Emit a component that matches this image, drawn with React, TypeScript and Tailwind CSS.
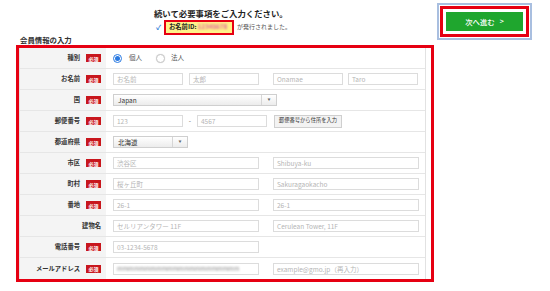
import React from 'react';

const font = { fontFamily: '"Noto Sans CJK JP", "Noto Sans", sans-serif' };

const Badge = () => (
  <span className="ml-[6px] inline-flex h-[8px] w-[15px] items-center justify-center bg-[#c8161d] text-[5px] leading-none text-white">
    必須
  </span>
);

const Field = ({ text, w = 'w-[70px]', dark = false }: { text: string; w?: string; dark?: boolean }) => (
  <div
    className={`${w} flex h-[12px] items-center overflow-hidden whitespace-nowrap border border-[#dcdcdc] bg-white px-[3px] text-[6.5px] leading-[10px] ${
      dark ? 'text-[#333]' : 'text-[#b5b5b5]'
    }`}
  >
    {text}
  </div>
);

const Row = ({ label, required = true, last = false, children }: { label: string; required?: boolean; last?: boolean; children: React.ReactNode }) => (
  <div className={`flex h-[21px] ${last ? '' : 'border-b border-[#e6e6e6]'}`}>
    <div className="flex w-[86px] items-center justify-end whitespace-nowrap bg-[#f4f4f4] pr-[5px] text-[6.3px] font-bold text-[#333]">
      <span>{label}</span>
      {required && <Badge />}
    </div>
    <div className="flex flex-1 items-center bg-white pl-[7px]">{children}</div>
  </div>
);

const Select = ({ value, w }: { value: string; w: string }) => (
  <div className={`${w} flex h-[12px] items-stretch border border-[#cfcfcf] bg-gradient-to-b from-white to-[#ececec] text-[6.5px] leading-[10px] text-[#333]`}>
    <span className="flex flex-1 items-center px-[4px]">{value}</span>
    <span className="flex w-[15px] items-center justify-center border-l border-[#d6d6d6] text-[3px] text-[#666]">▼</span>
  </div>
);

export default function App() {
  return (
    <div className="flex h-[291px] w-[550px] overflow-hidden bg-white" style={font}>
      <div className="w-[436px] shrink-0">
        <div className="pl-[154px] pt-[7px]">
          <div className="h-[12px] text-[8.4px] font-bold leading-[12px] text-[#222]">
            続いて必要事項をご入力ください。
          </div>
          <div className="flex h-[16px] items-center whitespace-nowrap">
            <span className="w-[10px] pl-[2px] text-[7px] font-bold leading-none text-[#2b7bd6]">✓</span>
            <div className="flex h-[15px] w-[70px] items-center overflow-hidden border-2 border-[#e60012] bg-[#fff38a] px-[3px] text-[6.3px] font-bold leading-none text-[#222]">
              お名前ID:
              <span className="ml-[1px] blur-[0.8px] text-[#e0609a]">12345678</span>
            </div>
            <span className="ml-[3px] text-[6px] leading-none text-[#555]">が発行されました。</span>
          </div>
        </div>
        <div className="h-[10px] pl-[20px] text-[7.4px] font-bold leading-[10px] text-[#333]">会員情報の入力</div>
        <div className="ml-[16px] w-[418px] border-[3px] border-[#e60012] pr-[5px]">
          <div className="border-x border-[#e2e2e2]">
            <Row label="種別">
              <div className="flex items-center text-[6.5px] text-[#555]">
                <span className="flex h-[9px] w-[9px] items-center justify-center rounded-full border border-[#2a7ae2] bg-white">
                  <span className="h-[5px] w-[5px] rounded-full bg-[#2a7ae2]" />
                </span>
                <span className="ml-[7px]">個人</span>
                <span className="ml-[14px] h-[9px] w-[9px] rounded-full border border-[#c8c8c8] bg-white shadow-[0_0_1px_rgba(0,0,0,0.2)]" />
                <span className="ml-[6px]">法人</span>
              </div>
            </Row>
            <Row label="お名前">
              <div className="flex">
                <Field text="お名前" />
                <div className="ml-[6px]"><Field text="太郎" /></div>
                <div className="ml-[14px]"><Field text="Onamae" /></div>
                <div className="ml-[5px]"><Field text="Taro" /></div>
              </div>
            </Row>
            <Row label="国">
              <Select value="Japan" w="w-[164px]" />
            </Row>
            <Row label="郵便番号">
              <div className="flex items-center">
                <Field text="123" />
                <span className="w-[14px] text-center text-[6.5px] text-[#666]">-</span>
                <Field text="4567" />
                <button className="ml-[7px] flex h-[13px] w-[68px] items-center justify-center whitespace-nowrap border border-[#cfcfcf] bg-[#f3f3f3] text-[5.3px] leading-none text-[#333]">
                  郵便番号から住所を入力
                </button>
              </div>
            </Row>
            <Row label="都道府県">
              <Select value="北海道" w="w-[75px]" />
            </Row>
            <Row label="市区">
              <div className="flex gap-[14px]">
                <Field text="渋谷区" w="w-[146px]" />
                <Field text="Shibuya-ku" w="w-[146px]" />
              </div>
            </Row>
            <Row label="町村">
              <div className="flex gap-[14px]">
                <Field text="桜ヶ丘町" w="w-[146px]" />
                <Field text="Sakuragaokacho" w="w-[146px]" />
              </div>
            </Row>
            <Row label="番地">
              <div className="flex gap-[14px]">
                <Field text="26-1" w="w-[146px]" />
                <Field text="26-1" w="w-[146px]" />
              </div>
            </Row>
            <Row label="建物名" required={false}>
              <div className="flex gap-[14px]">
                <Field text="セルリアンタワー 11F" w="w-[146px]" />
                <Field text="Cerulean Tower, 11F" w="w-[146px]" />
              </div>
            </Row>
            <Row label="電話番号">
              <Field text="03-1234-5678" w="w-[146px]" />
            </Row>
            <Row label="メールアドレス" last>
              <div className="flex gap-[14px]">
                <div className="flex h-[12px] w-[146px] items-center overflow-hidden whitespace-nowrap border border-[#dcdcdc] bg-white px-[3px] text-[6px] leading-[10px]">
                  <span className="blur-[1px] text-[#888]">mmmmmmmmmmmmmmmmmmmmmm</span>
                </div>
                <Field text="example@gmo.jp（再入力）" w="w-[146px]" />
              </div>
            </Row>
          </div>
        </div>
      </div>
      <div className="pt-[3px] pl-[1px]">
        <div className="border-2 border-[#a9bfe0] p-[1px]">
          <div className="border-[3px] border-[#e60012] p-[3px]">
            <button className="flex h-[19px] w-[77px] items-center justify-center bg-[#1fa62e] text-[7.4px] font-medium leading-none text-white">
              次へ進む
              <span className="ml-[5px] text-[7px] font-bold">&gt;</span>
            </button>
          </div>
        </div>
      </div>
    </div>
  );
}
